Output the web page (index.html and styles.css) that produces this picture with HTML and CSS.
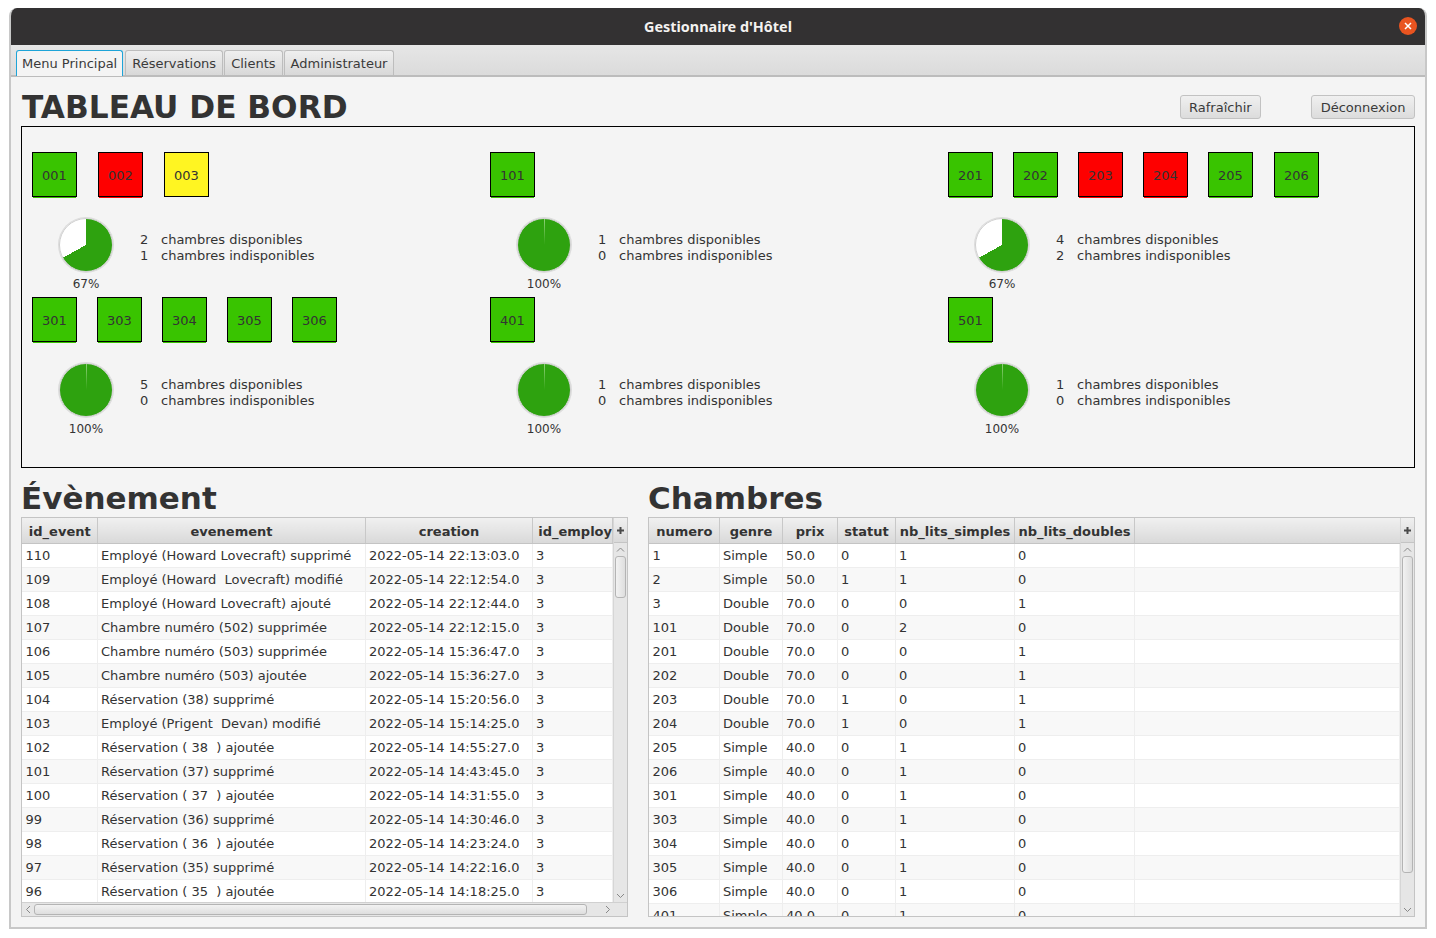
FILE: index.html
```html
<!DOCTYPE html>
<html lang="fr">
<head>
<meta charset="UTF-8" />
<title>Gestionnaire d'Hôtel</title>
<link rel="stylesheet" href="styles.css">
</head>
<body>

<div class="window">
  <header class="titlebar">
    <span class="title">Gestionnaire d'Hôtel</span>
    <span class="close">
      <svg width="8" height="8" viewBox="0 0 8 8"><path d="M1 1 7 7M7 1 1 7" stroke="#fff" stroke-width="1.5" fill="none"/></svg>
    </span>
  </header>

  <nav class="tabs">
    <span class="tab active">Menu Principal</span>
    <span class="tab">Réservations</span>
    <span class="tab">Clients</span>
    <span class="tab">Administrateur</span>
  </nav>

  <main class="content">
    <div class="top-row">
      <h1>TABLEAU DE BORD</h1>
      <button class="btn btn-refresh">Rafraîchir</button>
      <button class="btn">Déconnexion</button>
    </div>

    <section class="board">
      <div class="floor">
        <div class="rooms rooms-wide">
          <span class="room free">001</span>
          <span class="room busy">002</span>
          <span class="room wait">003</span>
        </div>
        <div class="stats">
          <div class="pie-box"><div class="pie" style="--pct:67%"></div><span class="pct">67%</span></div>
          <div class="counts"><span>2</span><span>chambres disponibles</span><span>1</span><span>chambres indisponibles</span></div>
        </div>
      </div>
      <div class="floor">
        <div class="rooms">
          <span class="room free">101</span>
        </div>
        <div class="stats">
          <div class="pie-box"><div class="pie full" style="--pct:100%"></div><span class="pct">100%</span></div>
          <div class="counts"><span>1</span><span>chambres disponibles</span><span>0</span><span>chambres indisponibles</span></div>
        </div>
      </div>
      <div class="floor">
        <div class="rooms rooms-six">
          <span class="room free">201</span>
          <span class="room free">202</span>
          <span class="room busy">203</span>
          <span class="room busy">204</span>
          <span class="room free">205</span>
          <span class="room free">206</span>
        </div>
        <div class="stats">
          <div class="pie-box"><div class="pie" style="--pct:67%"></div><span class="pct">67%</span></div>
          <div class="counts"><span>4</span><span>chambres disponibles</span><span>2</span><span>chambres indisponibles</span></div>
        </div>
      </div>
      <div class="floor">
        <div class="rooms">
          <span class="room free">301</span>
          <span class="room free">303</span>
          <span class="room free">304</span>
          <span class="room free">305</span>
          <span class="room free">306</span>
        </div>
        <div class="stats">
          <div class="pie-box"><div class="pie full" style="--pct:100%"></div><span class="pct">100%</span></div>
          <div class="counts"><span>5</span><span>chambres disponibles</span><span>0</span><span>chambres indisponibles</span></div>
        </div>
      </div>
      <div class="floor">
        <div class="rooms">
          <span class="room free">401</span>
        </div>
        <div class="stats">
          <div class="pie-box"><div class="pie full" style="--pct:100%"></div><span class="pct">100%</span></div>
          <div class="counts"><span>1</span><span>chambres disponibles</span><span>0</span><span>chambres indisponibles</span></div>
        </div>
      </div>
      <div class="floor">
        <div class="rooms">
          <span class="room free">501</span>
        </div>
        <div class="stats">
          <div class="pie-box"><div class="pie full" style="--pct:100%"></div><span class="pct">100%</span></div>
          <div class="counts"><span>1</span><span>chambres disponibles</span><span>0</span><span>chambres indisponibles</span></div>
        </div>
      </div>
    </section>

    <div class="lists">
      <section class="list list-events">
        <h2>Évènement</h2>
        <div class="tv">
          <div class="tv-main">
            <div class="tv-cols">
              <table class="events">
                <colgroup><col class="c-id"><col class="c-ev"><col class="c-cr"><col class="c-em"></colgroup>
                <thead><tr><th>id_event</th><th>evenement</th><th>creation</th><th class="th-clip">id_employ</th></tr></thead>
                <tbody>
                  <tr><td>110</td><td>Employé (Howard Lovecraft) supprimé</td><td>2022-05-14 22:13:03.0</td><td>3</td></tr>
                  <tr><td>109</td><td>Employé (Howard&nbsp; Lovecraft) modifié</td><td>2022-05-14 22:12:54.0</td><td>3</td></tr>
                  <tr><td>108</td><td>Employé (Howard Lovecraft) ajouté</td><td>2022-05-14 22:12:44.0</td><td>3</td></tr>
                  <tr><td>107</td><td>Chambre numéro (502) supprimée</td><td>2022-05-14 22:12:15.0</td><td>3</td></tr>
                  <tr><td>106</td><td>Chambre numéro (503) supprimée</td><td>2022-05-14 15:36:47.0</td><td>3</td></tr>
                  <tr><td>105</td><td>Chambre numéro (503) ajoutée</td><td>2022-05-14 15:36:27.0</td><td>3</td></tr>
                  <tr><td>104</td><td>Réservation (38) supprimé</td><td>2022-05-14 15:20:56.0</td><td>3</td></tr>
                  <tr><td>103</td><td>Employé (Prigent&nbsp; Devan) modifié</td><td>2022-05-14 15:14:25.0</td><td>3</td></tr>
                  <tr><td>102</td><td>Réservation ( 38&nbsp; ) ajoutée</td><td>2022-05-14 14:55:27.0</td><td>3</td></tr>
                  <tr><td>101</td><td>Réservation (37) supprimé</td><td>2022-05-14 14:43:45.0</td><td>3</td></tr>
                  <tr><td>100</td><td>Réservation ( 37&nbsp; ) ajoutée</td><td>2022-05-14 14:31:55.0</td><td>3</td></tr>
                  <tr><td>99</td><td>Réservation (36) supprimé</td><td>2022-05-14 14:30:46.0</td><td>3</td></tr>
                  <tr><td>98</td><td>Réservation ( 36&nbsp; ) ajoutée</td><td>2022-05-14 14:23:24.0</td><td>3</td></tr>
                  <tr><td>97</td><td>Réservation (35) supprimé</td><td>2022-05-14 14:22:16.0</td><td>3</td></tr>
                  <tr><td>96</td><td>Réservation ( 35&nbsp; ) ajoutée</td><td>2022-05-14 14:18:25.0</td><td>3</td></tr>
                </tbody>
              </table>
            </div>
            <div class="vbar">
              <div class="corner"><svg width="7" height="7" viewBox="0 0 7 7"><path d="M3.5 0v7M0 3.5h7" stroke="#4a4a4a" stroke-width="2" fill="none"/></svg></div>
              <svg class="arrow arrow-up" width="13" height="13" viewBox="0 0 13 13"><path d="M3 8.500 6.500 5l3.500 3.500" stroke="#888" fill="none"/></svg>
              <div class="vtrack"><div class="thumb thumb-short"></div></div>
              <svg class="arrow" width="13" height="12" viewBox="0 0 13 12"><path d="M3 4l3.500 3.500L10 4" stroke="#888" fill="none"/></svg>
            </div>
          </div>
          <div class="hbar">
            <svg class="arrow" width="12" height="13" viewBox="0 0 12 13"><path d="M8 3 4.500 6.500 8 10" stroke="#888" fill="none"/></svg>
            <div class="hthumb"></div>
            <svg class="arrow" width="12" height="13" viewBox="0 0 12 13"><path d="M5 3l3.500 3.500L5 10" stroke="#888" fill="none"/></svg>
          </div>
        </div>
      </section>

      <section class="list list-rooms">
        <h2>Chambres</h2>
        <div class="tv">
          <div class="tv-main">
            <div class="tv-cols">
              <table class="chambres">
                <colgroup><col class="c-nu"><col class="c-ge"><col class="c-pr"><col class="c-st"><col class="c-si"><col class="c-do"><col></colgroup>
                <thead><tr><th>numero</th><th>genre</th><th>prix</th><th>statut</th><th>nb_lits_simples</th><th>nb_lits_doubles</th><th class="filler"></th></tr></thead>
                <tbody>
                  <tr><td>1</td><td>Simple</td><td>50.0</td><td>0</td><td>1</td><td>0</td><td></td></tr>
                  <tr><td>2</td><td>Simple</td><td>50.0</td><td>1</td><td>1</td><td>0</td><td></td></tr>
                  <tr><td>3</td><td>Double</td><td>70.0</td><td>0</td><td>0</td><td>1</td><td></td></tr>
                  <tr><td>101</td><td>Double</td><td>70.0</td><td>0</td><td>2</td><td>0</td><td></td></tr>
                  <tr><td>201</td><td>Double</td><td>70.0</td><td>0</td><td>0</td><td>1</td><td></td></tr>
                  <tr><td>202</td><td>Double</td><td>70.0</td><td>0</td><td>0</td><td>1</td><td></td></tr>
                  <tr><td>203</td><td>Double</td><td>70.0</td><td>1</td><td>0</td><td>1</td><td></td></tr>
                  <tr><td>204</td><td>Double</td><td>70.0</td><td>1</td><td>0</td><td>1</td><td></td></tr>
                  <tr><td>205</td><td>Simple</td><td>40.0</td><td>0</td><td>1</td><td>0</td><td></td></tr>
                  <tr><td>206</td><td>Simple</td><td>40.0</td><td>0</td><td>1</td><td>0</td><td></td></tr>
                  <tr><td>301</td><td>Simple</td><td>40.0</td><td>0</td><td>1</td><td>0</td><td></td></tr>
                  <tr><td>303</td><td>Simple</td><td>40.0</td><td>0</td><td>1</td><td>0</td><td></td></tr>
                  <tr><td>304</td><td>Simple</td><td>40.0</td><td>0</td><td>1</td><td>0</td><td></td></tr>
                  <tr><td>305</td><td>Simple</td><td>40.0</td><td>0</td><td>1</td><td>0</td><td></td></tr>
                  <tr><td>306</td><td>Simple</td><td>40.0</td><td>0</td><td>1</td><td>0</td><td></td></tr>
                  <tr><td>401</td><td>Simple</td><td>40.0</td><td>0</td><td>1</td><td>0</td><td></td></tr>
                </tbody>
              </table>
            </div>
            <div class="vbar">
              <div class="corner"><svg width="7" height="7" viewBox="0 0 7 7"><path d="M3.5 0v7M0 3.5h7" stroke="#4a4a4a" stroke-width="2" fill="none"/></svg></div>
              <svg class="arrow arrow-up" width="13" height="13" viewBox="0 0 13 13"><path d="M3 8.500 6.500 5l3.500 3.500" stroke="#888" fill="none"/></svg>
              <div class="vtrack"><div class="thumb thumb-long"></div></div>
              <svg class="arrow" width="13" height="12" viewBox="0 0 13 12"><path d="M3 4l3.500 3.500L10 4" stroke="#888" fill="none"/></svg>
            </div>
          </div>
        </div>
      </section>
    </div>
  </main>
</div>

</body>
</html>
```

FILE: styles.css
```css
body { margin: 0; background: #fff; font-family: "DejaVu Sans", sans-serif; font-size: 13px; color: #333; }

.window {
  margin: 8px 0 0 9px; width: 1418px; height: 921px; box-sizing: border-box;
  display: flex; flex-direction: column; background: #f4f4f4;
  border: 2px solid #c8c8c8; border-top: 0; border-radius: 8px 8px 0 0; overflow: hidden;
}

.titlebar {
  height: 37px; flex: none; background: #333132; color: #f4f2f0; display: flex;
  align-items: center; justify-content: center; position: relative; margin: 0 -1px;
}
.title { font-family: "Noto Sans", sans-serif; font-weight: bold; font-size: 14.4px; }
.close {
  position: absolute; right: 9px; top: 9px; width: 18px; height: 18px; border-radius: 50%;
  background: #e95420; display: flex; align-items: center; justify-content: center;
}

.tabs {
  height: 32px; flex: none; box-sizing: border-box; border-bottom: 2px solid #bcbcbc;
  display: flex; align-items: flex-end; gap: 1px; padding-left: 5px;
  background: linear-gradient(#e6e6e6, #dbdbdb);
}
.tab {
  height: 25px; box-sizing: border-box; padding: 5px 6px 0; border: 1px solid #bdbdbd; border-bottom: 0;
  border-radius: 3px 3px 0 0; background: linear-gradient(#efefef, #d8d8d8); color: #3a3a3a;
}
.tab.active {
  background: #f4f4f4; border: 1px solid #1da4d8; border-bottom: 0; height: 26px;
  margin: 0 1px -1px 0; padding: 5px 5px 0;
}

.content { flex: 1; padding: 0 10px; min-height: 0; }

.top-row { height: 49px; display: flex; align-items: center; }
h1 { margin: 0 auto 0 1px; font-size: 31.2px; font-weight: bold; position: relative; top: 5px; }
.btn {
  height: 24px; box-sizing: border-box; padding: 0 8.5px; font: inherit; color: #3a3a3a;
  border: 1px solid #c2c2c2; border-radius: 3px; background: linear-gradient(#f0f0f0, #dcdcdc);
  margin-top: 11px;
}
.btn-refresh { margin-right: 50px; }

.board {
  height: 342px; box-sizing: border-box; border: 1px solid #000; padding: 25px 0 0 10px;
  display: grid; grid-template-columns: repeat(3, 458px); grid-auto-rows: 145px;
}
.rooms { display: flex; gap: 20px; height: 45px; }
.rooms-wide { gap: 21px; }
.rooms-six { gap: 20px; }
.rooms-six .room:last-child { margin-left: 1px; }
.room {
  width: 45px; height: 45px; box-sizing: border-box; border: 1px solid #000; display: flex;
  align-items: center; justify-content: center; color: #333; padding-top: 1px;
}
.room.free { background: #39c400; box-shadow: 0 2px 0 -1px #39c400; }
.room.busy { background: #fe0000; box-shadow: 0 2px 0 -1px #fe0000; }
.room.wait { background: #fff522; }

.stats { display: flex; margin-top: 21px; }
.pie-box { width: 108px; display: flex; flex-direction: column; align-items: center; }
.pie {
  width: 52px; height: 52px; border-radius: 50%; border: 1px solid #cfcfcf;
  background: conic-gradient(#2ea20f 0 var(--pct), #fff var(--pct) 100%);
  box-shadow: 0 0 0 1px #dcdcdc;
  position: relative;
}
.pie.full::after {
  content: ""; position: absolute; left: 26px; top: 0; width: 1px; height: 26px;
  background: linear-gradient(#8fd07a, #2ea20f);
}
.pct { font-size: 12px; margin-top: 5px; line-height: 14px; }
.counts {
  display: grid; grid-template-columns: 8px auto; column-gap: 13px; align-content: start;
  line-height: 16px; margin-top: 14px; justify-content: start;
}

.lists { display: flex; gap: 20px; margin-top: 9px; }
.list-events { width: 607px; }
.list-rooms { width: 767px; }
h2 { margin: 0; font-size: 31px; height: 40px; line-height: 42px; font-weight: bold; }

.tv { height: 400px; box-sizing: border-box; border: 1px solid #c4c4c4; display: flex; flex-direction: column; background: #fff; }
.tv-main { flex: 1; min-height: 0; display: flex; }
.tv-cols { flex: 1; min-width: 0; overflow: hidden; }

table { border-collapse: collapse; table-layout: fixed; width: 100%; }
th {
  height: 25px; padding: 2px 0 0 1px; box-sizing: border-box; text-align: center; font-weight: bold; white-space: nowrap;
  background: linear-gradient(#f0f0f0, #d9d9d9); border-right: 1px solid #c8c8c8; border-bottom: 1px solid #c4c4c4;
  overflow: hidden;
}
th.th-clip { text-align: right; padding-right: 0; }
th.filler { border-right: 0; }
td {
  height: 24px; padding: 0 3px 0 3.5px; box-sizing: border-box; white-space: nowrap; overflow: hidden;
  border-right: 1px solid #eee; border-bottom: 1px solid #eee;
}
tbody tr:nth-child(even) { background: #f8f8f8; }

.c-id { width: 75px; }
.c-ev { width: 268px; }
.c-cr { width: 167px; }
.c-nu { width: 70px; }
.c-ge { width: 63px; }
.c-pr { width: 55px; }
.c-st { width: 58px; }
.c-si { width: 119px; }
.c-do { width: 120px; }

.vbar { width: 14px; box-sizing: border-box; flex: none; display: flex; flex-direction: column; background: #e6e6e6; border-left: 1px solid #d6d6d6; }
.corner {
  height: 25px; flex: none; box-sizing: border-box; background: linear-gradient(#f0f0f0, #d9d9d9);
  border-bottom: 1px solid #c4c4c4; display: flex; align-items: center; justify-content: center;
}
.arrow { flex: none; display: block; }
.vtrack { flex: 1; padding: 0 1px; min-height: 0; }
.thumb { height: 42px; box-sizing: border-box; border: 1px solid #b4b4b4; border-radius: 3px; background: linear-gradient(90deg, #f2f2f2, #dedede); }
.thumb-long { height: 317px; }

.hbar { height: 14px; flex: none; display: flex; align-items: center; background: #e6e6e6; border-top: 1px solid #d0d0d0; box-sizing: border-box; }
.hthumb { width: 553px; height: 11px; box-sizing: border-box; border: 1px solid #b4b4b4; border-radius: 3px; background: linear-gradient(#f2f2f2, #dedede); margin-right: 14px; }
```
